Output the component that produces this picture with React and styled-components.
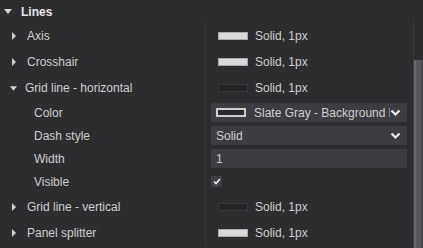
import React from "react";
import styled, { createGlobalStyle } from "styled-components";

const Global = createGlobalStyle`
  html, body { margin: 0; padding: 0; background: #2d2d30; }
  body { font-family: "Liberation Sans", Arial, sans-serif; }
`;

const Panel = styled.div`
  width: 423px;
  height: 248px;
  display: flex;
  background: #2d2d30;
  overflow: hidden;
  color: #cfcfcf;
  font-size: 12px;
  font-family: "Liberation Sans", Arial, sans-serif;
`;

const Content = styled.div`
  flex: 1;
  min-width: 0;
  display: flex;
  flex-direction: column;
`;

const Header = styled.div`
  height: 23px;
  display: flex;
  align-items: center;
  padding-left: 4px;
  gap: 9px;
  font-weight: bold;
  color: #e6e6e6;
`;

const Grid = styled.div`
  display: grid;
  grid-template-columns: 205px minmax(0, 1fr);
`;

const Label = styled.div`
  height: ${(p) => p.$h}px;
  display: flex;
  align-items: center;
  padding-left: ${(p) => p.$indent}px;
  color: #cdcdcd;
  white-space: nowrap;
`;

const Arrow = styled.span`
  width: 15px;
  display: inline-flex;
  align-items: center;
  flex: none;
`;

const Value = styled.div`
  height: ${(p) => p.$h}px;
  min-width: 0;
  border-left: 1px solid #3a3a3e;
  display: flex;
  align-items: center;
  padding-left: ${(p) => p.$pad}px;
  padding-right: 6px;
  color: #cdcdcd;
  white-space: nowrap;
`;

const Swatch = styled.span`
  width: 28px;
  height: 6px;
  flex: none;
  border: 1px solid ${(p) => (p.$light ? "#a9a9a9" : "#3a3a3d")};
  background: ${(p) => (p.$light ? "#d9d9d9" : "#252527")};
  margin-right: 7px;
`;

const Field = styled.div`
  flex: 1;
  min-width: 0;
  height: 19px;
  background: #3c3c41;
  display: flex;
  align-items: center;
  padding: 0 6px 0 5px;
  overflow: hidden;
  color: #cfcfcf;
`;

const FieldText = styled.span`
  flex: 1;
  min-width: 0;
  overflow: hidden;
  white-space: nowrap;
`;

const OutlineSwatch = styled.span`
  width: 26px;
  height: 5px;
  border: 2px solid #cfcfcf;
  background: #2a2a2c;
  margin-right: 8px;
  flex: none;
`;

const Check = styled.span`
  width: 11px;
  height: 11px;
  background: #3f3f44;
  display: inline-flex;
  align-items: center;
  justify-content: center;
`;

const Scroll = styled.div`
  width: 9px;
  flex: none;
  margin-top: 20px;
  padding-top: 40px;
  border-left: 1px solid #3c3c40;
  display: flex;
  flex-direction: column;
`;

const Thumb = styled.div`
  flex: 1;
  background: linear-gradient(to right, #6a6a6e 0 2px, #58585c 2px 7px, #4a4a4e 7px);
`;

const Right = () => (
  <svg width="5" height="8" viewBox="0 0 5 8">
    <polygon points="0,0 4,4 0,8" fill="#d0d0d0" />
  </svg>
);
const Down = ({ w = 8 }) => (
  <svg width={w} height="5" viewBox="0 0 8 5">
    <polygon points="0,0 8,0 4,5" fill="#d6d6d6" />
  </svg>
);
const Chevron = () => (
  <svg width="11" height="8" viewBox="0 0 11 8">
    <polyline points="1.5,1.5 5.5,5.5 9.5,1.5" fill="none" stroke="#e8e8e8" strokeWidth="2.2" />
  </svg>
);
const Tick = () => (
  <svg width="8" height="7" viewBox="0 0 8 7">
    <polyline points="1,3.5 3,5.5 7,1" fill="none" stroke="#f0f0f0" strokeWidth="1.6" />
  </svg>
);

const Group = ({ name, open, light, h = 26 }) => (
  <>
    <Label $h={h} $indent={open ? 10 : 12}>
      <Arrow>{open ? <Down w={7} /> : <Right />}</Arrow>
      {name}
    </Label>
    <Value $h={h} $pad={12}>
      <Swatch $light={light} />
      Solid, 1px
    </Value>
  </>
);

const Sub = ({ name, children, pad = 5 }) => (
  <>
    <Label $h={23} $indent={34}>
      {name}
    </Label>
    <Value $h={23} $pad={pad}>
      {children}
    </Value>
  </>
);

export default function App() {
  return (
    <>
      <Global />
      <Panel>
        <Content>
          <Header>
            <Down />
            Lines
          </Header>
          <Grid>
            <Group name="Axis" light />
            <Group name="Crosshair" light />
            <Group name="Grid line - horizontal" open />
            <Sub name="Color">
              <Field>
                <OutlineSwatch />
                <FieldText>Slate Gray - Background l</FieldText>
                <Chevron />
              </Field>
            </Sub>
            <Sub name="Dash style">
              <Field>
                <FieldText>Solid</FieldText>
                <Chevron />
              </Field>
            </Sub>
            <Sub name="Width">
              <Field>
                <FieldText>1</FieldText>
              </Field>
            </Sub>
            <Sub name="Visible">
              <Check>
                <Tick />
              </Check>
            </Sub>
            <Group name="Grid line - vertical" h={27} />
            <Group name="Panel splitter" light />
          </Grid>
        </Content>
        <Scroll>
          <Thumb />
        </Scroll>
      </Panel>
    </>
  );
}
